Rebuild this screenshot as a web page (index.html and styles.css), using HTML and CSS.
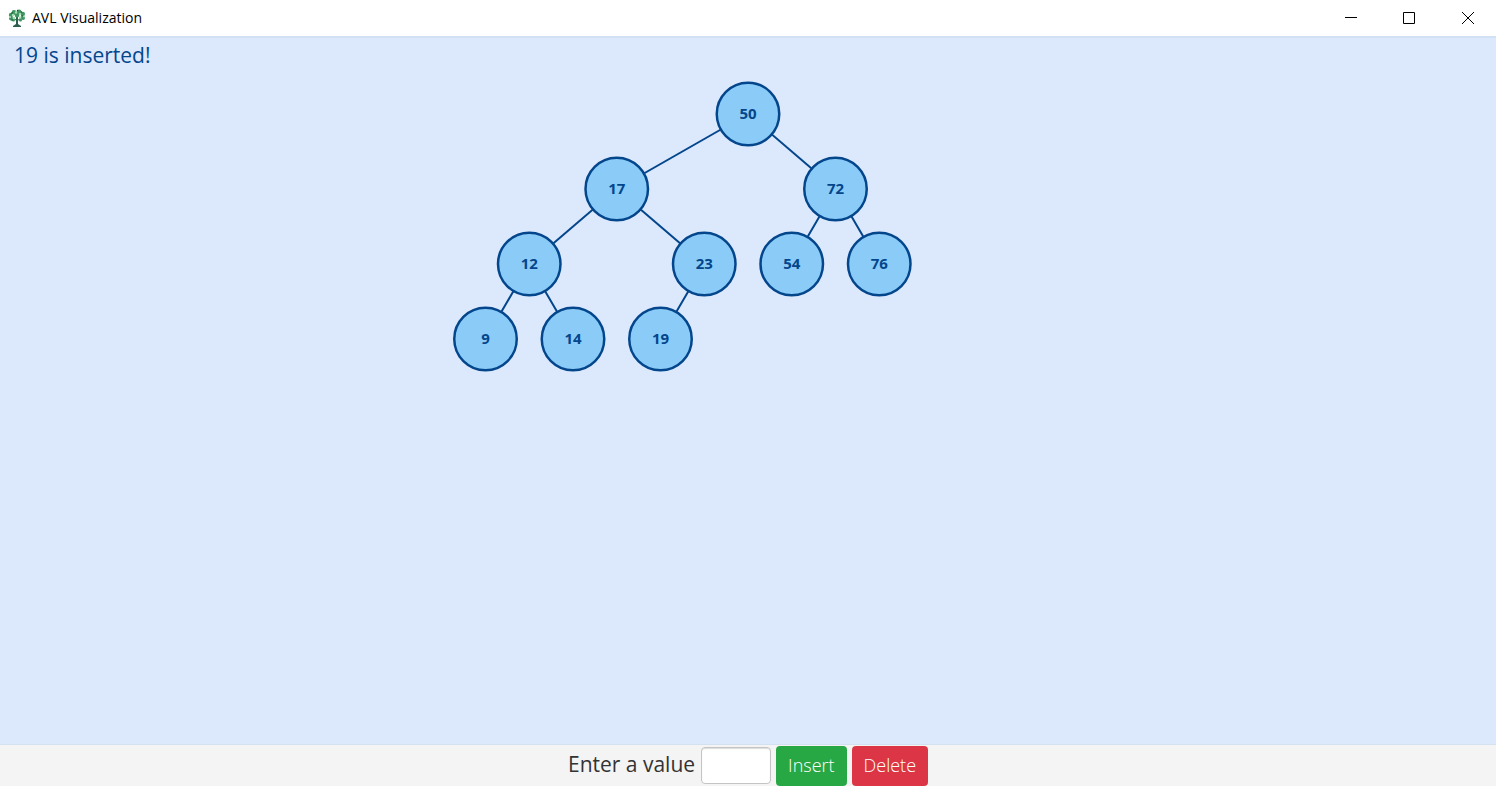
FILE: index.html
```html
<!DOCTYPE html>
<html lang="en">
<head>
<meta charset="utf-8">
<title>AVL Visualization</title>
<link rel="stylesheet" href="styles.css">
</head>
<body>
<header class="titlebar">
  <svg class="app-icon" viewBox="0 0 18 18" aria-hidden="true">
    <path d="M8 8h2v7l3 2v1H5v-1l3-2z" fill="#2c5f4c"/>
    <path d="M9 12 4.500 8M9 12l5-4M9 9V4" stroke="#28644a" stroke-width="1" fill="none"/>
    <g fill="#3f9560">
      <circle cx="3" cy="6" r="2.200"/><circle cx="6" cy="3.500" r="2.400"/><circle cx="11" cy="3" r="2.400"/><circle cx="14.800" cy="5" r="2.200"/>
      <circle cx="3" cy="9.500" r="2"/><circle cx="15" cy="9" r="2"/><circle cx="9" cy="6" r="2.400"/><circle cx="12.500" cy="11" r="1.600"/><circle cx="5.500" cy="11" r="1.600"/>
    </g>
    <g fill="#a5dfb3">
      <circle cx="5" cy="6" r="1.200"/><circle cx="8" cy="3.500" r="1.200"/><circle cx="12" cy="5" r="1.200"/><circle cx="6" cy="9" r="1.200"/><circle cx="12" cy="8.500" r="1.200"/><circle cx="2" cy="8" r="1"/><circle cx="16" cy="7.500" r="1"/>
    </g>
    <g fill="#174e3b">
      <circle cx="4" cy="4" r=".8"/><circle cx="9.500" cy="1.500" r=".7"/><circle cx="14" cy="7" r=".8"/><circle cx="4" cy="11" r=".8"/><circle cx="13.500" cy="3" r=".7"/>
    </g>
  </svg>
  <h1 class="title">AVL Visualization</h1>
  <div class="window-controls">
    <button class="window-button" type="button" aria-label="Minimize"><svg viewBox="0 0 14 14"><path d="M1 6.500h12"/></svg></button>
    <button class="window-button" type="button" aria-label="Maximize"><svg viewBox="0 0 14 14"><path d="M1.500 1.500h11v11h-11z"/></svg></button>
    <button class="window-button" type="button" aria-label="Close"><svg viewBox="0 0 14 14"><path d="M2 1l12 12M14 1 2 13"/></svg></button>
  </div>
</header>
<main class="canvas">
  <p class="status">19 is inserted!</p>
  <svg class="tree" viewBox="0 0 600 300" role="img" aria-label="AVL tree">
    <path class="edges" d="M300 38 168.750 113 81.250 188 37.500 263M81.250 188 125 263M168.750 113 256.250 188 212.500 263M300 38l87.500 75-43.750 75M387.500 113l43.750 75"/>
    <g class="node"><circle cx="300" cy="38" r="31.250"/><text x="300" y="43">50</text></g>
    <g class="node"><circle cx="168.750" cy="113" r="31.250"/><text x="168.750" y="118">17</text></g>
    <g class="node"><circle cx="387.500" cy="113" r="31.250"/><text x="387.500" y="118">72</text></g>
    <g class="node"><circle cx="81.250" cy="188" r="31.250"/><text x="81.250" y="193">12</text></g>
    <g class="node"><circle cx="256.250" cy="188" r="31.250"/><text x="256.250" y="193">23</text></g>
    <g class="node"><circle cx="343.750" cy="188" r="31.250"/><text x="343.750" y="193">54</text></g>
    <g class="node"><circle cx="431.250" cy="188" r="31.250"/><text x="431.250" y="193">76</text></g>
    <g class="node"><circle cx="37.500" cy="263" r="31.250"/><text x="37.500" y="268">9</text></g>
    <g class="node"><circle cx="125" cy="263" r="31.250"/><text x="125" y="268">14</text></g>
    <g class="node"><circle cx="212.500" cy="263" r="31.250"/><text x="212.500" y="268">19</text></g>
  </svg>
</main>
<form class="toolbar">
  <label class="value-label" for="value">Enter a value</label>
  <input class="value-input" id="value" type="text">
  <button class="action insert" type="button">Insert</button>
  <button class="action delete" type="button">Delete</button>
</form>
</body>
</html>
```
FILE: styles.css
```css
* { box-sizing: border-box; }
body {
  margin: 0;
  min-height: 100vh;
  display: flex;
  flex-direction: column;
  font-family: "Open Sans", "Noto Sans", sans-serif;
  background: #f4f4f4;
}
.titlebar {
  display: flex;
  align-items: center;
  height: 36px;
  padding-left: 8px;
  background: #fff;
}
.app-icon { width: 18px; height: 18px; margin-right: 6px; }
.title { margin: 0; font-size: 14px; font-weight: 400; line-height: 20px; color: #000; }
.window-controls { display: flex; align-self: stretch; margin-left: auto; }
.window-button {
  width: 58px;
  padding: 0;
  border: 0;
  background: none;
  display: flex;
  align-items: center;
  justify-content: center;
}
.window-button svg { width: 14px; height: 14px; fill: none; stroke: #000; stroke-width: 1; }
.canvas {
  flex: 1;
  display: flex;
  flex-direction: column;
  background: #dce8fc;
  border-top: 2px solid #d2e0f4;
  border-bottom: 1px solid #d2e0f0;
}
.status { margin: 0; padding: 2px 14px 6px; font-size: 21px; line-height: 30px; color: #04468c; }
.tree { width: 600px; height: 300px; align-self: center; }
.edges { fill: none; stroke: #04468c; stroke-width: 2; }
.node circle { fill: #8accf7; stroke: #04468c; stroke-width: 2.500; }
.node text { fill: #04468c; font-size: 15px; font-weight: 700; text-anchor: middle; }
.toolbar {
  display: flex;
  align-items: center;
  justify-content: center;
  gap: 5px;
  height: 41px;
}
.value-label { font-size: 21px; line-height: 30px; color: #333; margin-right: 1px; padding-bottom: 4px; }
.value-input {
  width: 70px;
  height: 37px;
  font: inherit;
  font-size: 18px;
  border: 1px solid #c4c4c4;
  border-radius: 4px;
  background: #fff;
  box-shadow: inset 0 1px 1px #ddd;
}
.action {
  height: 40px;
  padding: 0 12px 1px;
  border: 0;
  border-radius: 4px;
  font: inherit;
  font-size: 18px;
  font-weight: 300;
  color: #fff;
}
.insert { background: #28a745; }
.delete { background: #dc3545; }
```
